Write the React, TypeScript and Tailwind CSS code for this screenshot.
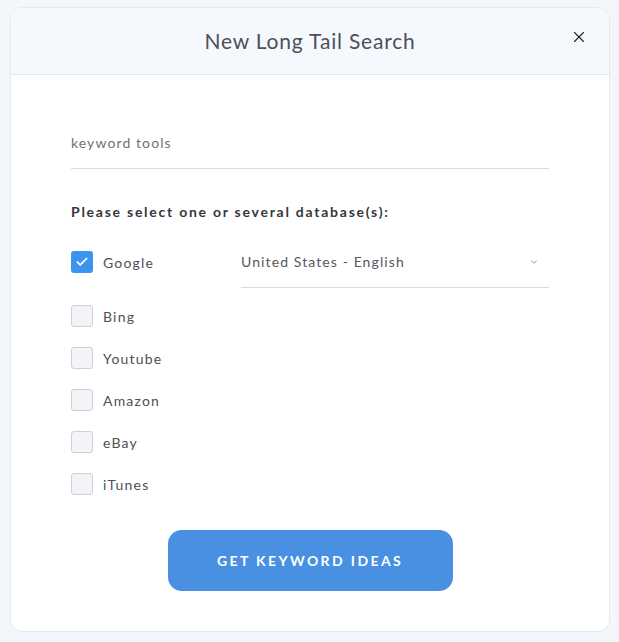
import React from "react";
import { X, ChevronDown, Check } from "lucide-react";

const databases = ["Google", "Bing", "Youtube", "Amazon", "eBay", "iTunes"];

function Checkbox({ checked }: { checked: boolean }) {
  return checked ? (
    <span className="w-[22px] h-[22px] rounded-[3px] bg-[#3b95ee] flex items-center justify-center">
      <Check size={14} strokeWidth={3} className="text-white" />
    </span>
  ) : (
    <span className="w-[22px] h-[22px] rounded-[3px] border border-[#cdd1d7] bg-[#f2f4f8]" />
  );
}

export default function App() {
  const [checked] = React.useState<string[]>(["Google"]);
  return (
    <div className="min-h-[642px] bg-[#f3f6fa] pt-[7px] px-[10px] font-['Lato',sans-serif]">
      <div className="w-[600px] h-[625px] bg-white rounded-[12px] border border-[#e6eaf0] overflow-hidden flex flex-col">
        <div className="h-[67px] bg-[#f5f8fc] border-b border-[#e3e7ed] flex items-center justify-center relative">
          <h1 className="text-[21px] text-[#4b505b] tracking-[0.8px]">New Long Tail Search</h1>
          <button className="absolute right-[21px] top-[20px] text-[#222]">
            <X size={18} strokeWidth={1.5} />
          </button>
        </div>

        <div className="px-[60px] pt-[57px] flex flex-col">
          <div className="border-b border-[#d9dbde] pb-[15px] text-[14px] text-[#6e7279] tracking-[1.1px]">
            keyword tools
          </div>

          <p className="mt-[32px] text-[14px] font-bold text-[#34373d] tracking-[1.75px]">
            Please select one or several database(s):
          </p>

          <div className="mt-[14px] flex flex-col">
            {databases.map((db) =>
              db === "Google" ? (
                <div key={db} className="h-[59px]">
                  <div className="flex items-center h-[52px]">
                    <label className="flex items-center gap-[10px] w-[170px]">
                      <Checkbox checked={checked.includes(db)} />
                      <span className="text-[14px] text-[#4d5057] tracking-[1.2px]">{db}</span>
                    </label>
                    <div className="flex-1 h-[52px] flex items-center justify-between border-b border-[#d9dbde]">
                      <span className="text-[14px] text-[#55585f] tracking-[1.1px]">United States - English</span>
                      <ChevronDown size={10} strokeWidth={2} className="text-[#4a90e2] mr-[10px]" />
                    </div>
                  </div>
                </div>
              ) : (
                <label key={db} className="flex items-center gap-[10px] h-[42px]">
                  <Checkbox checked={checked.includes(db)} />
                  <span className="text-[14px] text-[#4d5057] tracking-[1.2px]">{db}</span>
                </label>
              )
            )}
          </div>

          <div className="flex justify-center mt-[25px]">
            <button className="w-[285px] h-[61px] rounded-[14px] bg-[#4a90e2] text-white text-[14px] font-bold tracking-[2.4px] uppercase">
              Get Keyword Ideas
            </button>
          </div>
        </div>
      </div>
    </div>
  );
}
